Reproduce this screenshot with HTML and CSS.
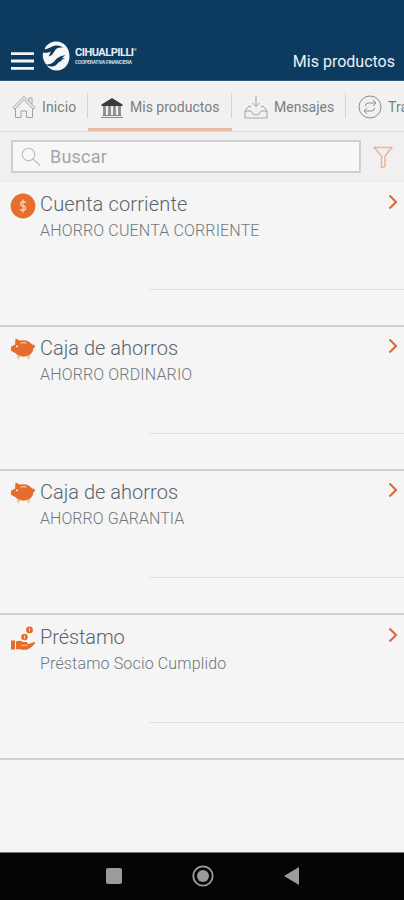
FILE: index.html
```html
<!DOCTYPE html>
<html lang="es">
<head>
<meta charset="utf-8">
<title>Mis productos</title>
<link rel="stylesheet" href="styles.css">
</head>
<body>
<svg class="defs" aria-hidden="true">
  <symbol id="chevron" viewBox="0 0 10 16"><path d="M1.500 1.500 8 8l-6.500 6.500" fill="none" stroke="#dc6d44" stroke-width="2.200"/></symbol>
  <symbol id="pig" viewBox="0 0 26 24">
    <ellipse cx="13.500" cy="11.500" rx="9.800" ry="8.200" fill="#e66c2c"/>
    <path d="M5.500 1.500 11 4 5 9Zm-.8 6L1 9.800v4L5 16ZM22 7.500l2.800.5v2.500L22 12Z" fill="#e66c2c"/>
    <path d="M8.500 18v3.500M18.500 18v3.500" stroke="#f0a47e" stroke-width="1.800"/>
    <path d="M10.500 6.300q3-1.300 6 0" fill="none" stroke="#f7c5a5" stroke-width="1.200"/><circle cx="7" cy="9.300" r="1.100" fill="#fbe2d2"/>
  </symbol>
</svg>
<header class="header">
  <svg class="burger" width="23" height="18" viewBox="0 0 23 18"><path d="M0 1.700h23M0 9h23M0 16.300h23" stroke="#f2f5f8" stroke-width="2.800"/></svg>
  <svg class="emblem" width="28" height="31" viewBox="0 0 28 31">
    <path d="M3.500 6C7 2 10 .5 14.500 .5 22 .5 27.500 7 27.500 15c0 8-5 14.500-12.500 14.500-5 0-8.500-2-10.500-5.500C2 21 .3 17 .8 12.500Z" fill="#f5f7f9"/>
    <path d="M1 8.500C7 8.500 9 5 14 4.500q5-.5 7.500 2.500c-4-1-6.500-.5-8.500 2.500L10 14l-3.500 1.500L9 10.500Q6 12.500 1 11.500Z" fill="#0d3b60"/>
    <path d="M3.500 23.500c5 0 7.500-1.500 9.500-4 3-3.500 6-4.500 10.500-5.500l-3.500 3 3 .5-4 1.500 1 1c-4 0-4.500 5-9.500 5.500q-4 .5-7-2Z" fill="#0d3b60"/>
  </svg>
  <div class="brand"><span class="brand-name">CIHUALPILLI<sup>®</sup></span><span class="brand-sub">COOPERATIVA FINANCIERA</span></div>
  <h1 class="title">Mis productos</h1>
</header>
<nav class="tabs">
  <a class="tab home">
    <svg width="24" height="24" viewBox="0 0 24 24" fill="none" stroke="#a2a2a2" stroke-width="1"><path d="m1 12.500 2 1.500 9-9.500 9 9.500 2-1.500L12 1.500ZM17 6.300V3h3v6.500M3.500 14v8.500h5.500V16h5.500v6.500h6V14"/></svg>
    <span>Inicio</span>
  </a>
  <a class="tab products active">
    <svg width="24" height="22" viewBox="0 0 24 22"><path d="m12 1 10.500 6.500V9h-21V7.500Z" fill="#3b3b3b"/><path d="M4.500 9v10M9.500 9v10M14.500 9v10M19.500 9v10" stroke="#8d8d8d" stroke-width="2.800"/><path d="M2.500 18.500h19M1 20.500h22" stroke="#858585" stroke-width="1.200"/></svg>
    <span>Mis productos</span>
  </a>
  <a class="tab messages">
    <svg width="24" height="24" viewBox="0 0 24 24" fill="none" stroke="#a2a2a2" stroke-width="1"><path d="M12 1v10M8.500 8l3.500 3.500L15.500 8M7 11.500H4.500L1 16v7h22v-7l-3.500-4.500H17M1 16h6q1 4 5 4t5-4h6"/></svg>
    <span>Mensajes</span>
  </a>
  <a class="tab transfers">
    <svg width="24" height="24" viewBox="0 0 24 24" fill="none" stroke="#8d8d8d" stroke-width="1"><circle cx="12" cy="12" r="11"/><path d="M7.500 11q0-3 3-3H18m-3-3 3 3-3 3M16.500 13q0 3-3 3H6m3-3-3 3 3 3"/></svg>
    <span>Transferencias</span>
  </a>
</nav>
<div class="search-row">
  <div class="search">
    <svg width="20" height="20" viewBox="0 0 20 20" fill="none" stroke="#b9bbbc" stroke-width="1.100"><circle cx="7.500" cy="7.500" r="6.300"/><path d="m12 12 7 6.500"/></svg>
    <span>Buscar</span>
  </div>
  <svg class="filter" width="20" height="23" viewBox="0 0 20 23"><path d="M1.300 1.500h17.400L12 10v10.500l-3.500 1V10Z" fill="none" stroke="#e9b497" stroke-width="1.500"/></svg>
</div>
<main class="list">
  <section class="item">
    <svg class="item-icon" width="26" height="26" viewBox="0 0 26 26"><circle cx="13" cy="13" r="12.400" fill="#e66f2d"/><path d="M15.500 10q-.5-1.500-2.500-1.500T10.700 10.700 13 13t2.500 2.200-2.500 2.300T10.500 16M13 6.500v13" fill="none" stroke="#f8d3bc" stroke-width="1.300"/></svg>
    <div class="item-text"><h2>Cuenta corriente</h2><p class="s1">AHORRO CUENTA CORRIENTE</p></div>
    <svg class="arrow" width="10" height="16"><use href="#chevron"/></svg>
  </section>
  <section class="item">
    <svg class="item-icon" width="26" height="24"><use href="#pig"/></svg>
    <div class="item-text"><h2 class="t2">Caja de ahorros</h2><p class="s2">AHORRO ORDINARIO</p></div>
    <svg class="arrow" width="10" height="16"><use href="#chevron"/></svg>
  </section>
  <section class="item">
    <svg class="item-icon" width="26" height="24"><use href="#pig"/></svg>
    <div class="item-text"><h2 class="t2">Caja de ahorros</h2><p class="s3">AHORRO GARANTIA</p></div>
    <svg class="arrow" width="10" height="16"><use href="#chevron"/></svg>
  </section>
  <section class="item">
    <svg class="item-icon" width="26" height="26" viewBox="0 0 26 26"><path d="M1 14.500h4v9H1Z" fill="#e66c2c"/><path d="M6 15.500q4-1.500 7 .5h4q1.500 1.500 0 2.500l7.500-2.500q1 .5.500 1.500-3 4-7.500 6-5 .7-7-.3H6Z" fill="#e66c2c"/><path d="M11 19.300h6" stroke="#f7c5a5"/><g fill="#e66c2c"><circle cx="19.500" cy="3.900" r="3.400"/><circle cx="14.500" cy="11" r="3.300"/></g><path d="M19.500 2.200v3.400M14.500 9.300v3.400" stroke="#f9d5bd"/></svg>
    <div class="item-text"><h2 class="t4">Préstamo</h2><p class="s4">Préstamo Socio Cumplido</p></div>
    <svg class="arrow" width="10" height="16"><use href="#chevron"/></svg>
  </section>
</main>
<footer class="navbar">
  <svg width="16" height="16" viewBox="0 0 16 16"><rect width="16" height="16" rx="2" fill="#9b9b9b"/></svg>
  <svg width="22" height="22" viewBox="0 0 22 22"><circle cx="11" cy="11" r="9.700" fill="none" stroke="#9b9b9b" stroke-width="1.800"/><circle cx="11" cy="11" r="6" fill="#9b9b9b"/></svg>
  <svg width="15" height="18" viewBox="0 0 15 18"><path d="M0 9 15 0v18Z" fill="#9b9b9b"/></svg>
</footer>
</body>
</html>
```
FILE: styles.css
```css
* { box-sizing: border-box; }
body {
  margin: 0;
  width: 404px;
  height: 900px;
  overflow: hidden;
  display: flex;
  flex-direction: column;
  background: #f5f5f5;
  font-family: Roboto, "Liberation Sans", sans-serif;
}
svg { display: block; flex: none; }
.defs { position: absolute; width: 0; height: 0; }
h1, h2, p { margin: 0; font-weight: 400; white-space: nowrap; }

.header {
  height: 81px;
  flex: none;
  display: flex;
  align-items: flex-start;
  padding: 41px 9px 0 11px;
  background: #0d3b60;
  border-bottom: 1px solid #315778;
}
.burger { margin-top: 11px; }
.emblem { margin-left: 8px; }
.brand { display: flex; flex-direction: column; margin: 6px 0 0 5px; color: #e9eef3; }
.brand-name { font-size: 11px; line-height: 12px; font-weight: 700; letter-spacing: -0.5px; white-space: nowrap; }
.brand-sub { font-size: 5px; line-height: 7px; font-weight: 500; letter-spacing: -0.28px; white-space: nowrap; }
.brand-name sup { font-size: 4px; line-height: 0; vertical-align: 5px; }
.title { margin: 10px 0 0 auto; font-size: 16px; line-height: 22px; letter-spacing: 0; color: #edf1f5; }

.tabs {
  height: 51px;
  flex: none;
  display: flex;
  overflow: hidden;
  background: #f1f1f1;
  border-bottom: 1px solid #dadada;
}
.tab {
  position: relative;
  flex: none;
  display: flex;
  align-items: center;
  gap: 6px;
  font-size: 14px;
  letter-spacing: 0.1px;
  color: #7c7d7e;
  white-space: nowrap;
}
.tab svg { margin-top: 2px; }
.tab span { margin-top: 2px; }
.tab + .tab::before {
  content: "";
  position: absolute;
  left: -1px;
  top: 12px;
  width: 1px;
  height: 25px;
  background: #d4d4d4;
}
.home { width: 88px; padding-left: 12px; }
.products { width: 144px; padding-left: 12px; letter-spacing: 0; border-bottom: 3px solid #e8bea5; }
.products svg { margin-top: 7px; }
.products span { margin-top: 5px; }
.messages { width: 114px; padding-left: 12px; letter-spacing: 0; }
.transfers { padding-left: 12px; }

.search-row {
  height: 50px;
  flex: none;
  display: flex;
  align-items: flex-start;
  padding: 8px 11px 0;
  background: #f0f0f0;
  border-bottom: 1px solid #e8e8e8;
}
.search {
  width: 351px;
  height: 33px;
  display: flex;
  align-items: center;
  gap: 9px;
  padding-left: 8px;
  border: 2px solid #cdcfd0;
  background: #f7f7f7;
  font-size: 18px;
  letter-spacing: 0.2px;
  color: #a1a6aa;
}
.filter { margin: 6px 0 0 12px; }

.list { padding-top: 0.5px; }
.item {
  position: relative;
  height: 144.330px;
  display: flex;
  align-items: flex-start;
  padding: 9.300px 6px 0 10px;
  border-bottom: 2px solid #cfcfcf;
}
.item::after {
  content: "";
  position: absolute;
  left: 149px;
  right: 0;
  top: 106.300px;
  height: 1px;
  background: #dfe1e1;
}
.item-icon { margin-top: 1px; }
.item-text { margin-left: 4px; }
.item h2 { font-size: 20px; line-height: 24px; letter-spacing: 0.16px; color: #58646b; font-weight: 300; }
.item h2.t2 { letter-spacing: 0.02px; }
.item h2.t4 { letter-spacing: -0.1px; }
.item p { margin-top: 5px; font-size: 16px; line-height: 20px; letter-spacing: 0.16px; color: #6f777c; font-weight: 300; }
.item p.s3 { letter-spacing: 0.06px; }
.arrow { margin: 2px 0 0 auto; }

.navbar {
  margin-top: auto;
  height: 48px;
  flex: none;
  display: flex;
  align-items: center;
  padding-left: 106px;
  background: #050505;
  border-top: 1px solid #777;
}
.navbar svg { margin-top: -1px; }
.navbar svg:nth-child(2) { margin-left: 70px; }
.navbar svg:nth-child(3) { margin-left: 70px; }
```
